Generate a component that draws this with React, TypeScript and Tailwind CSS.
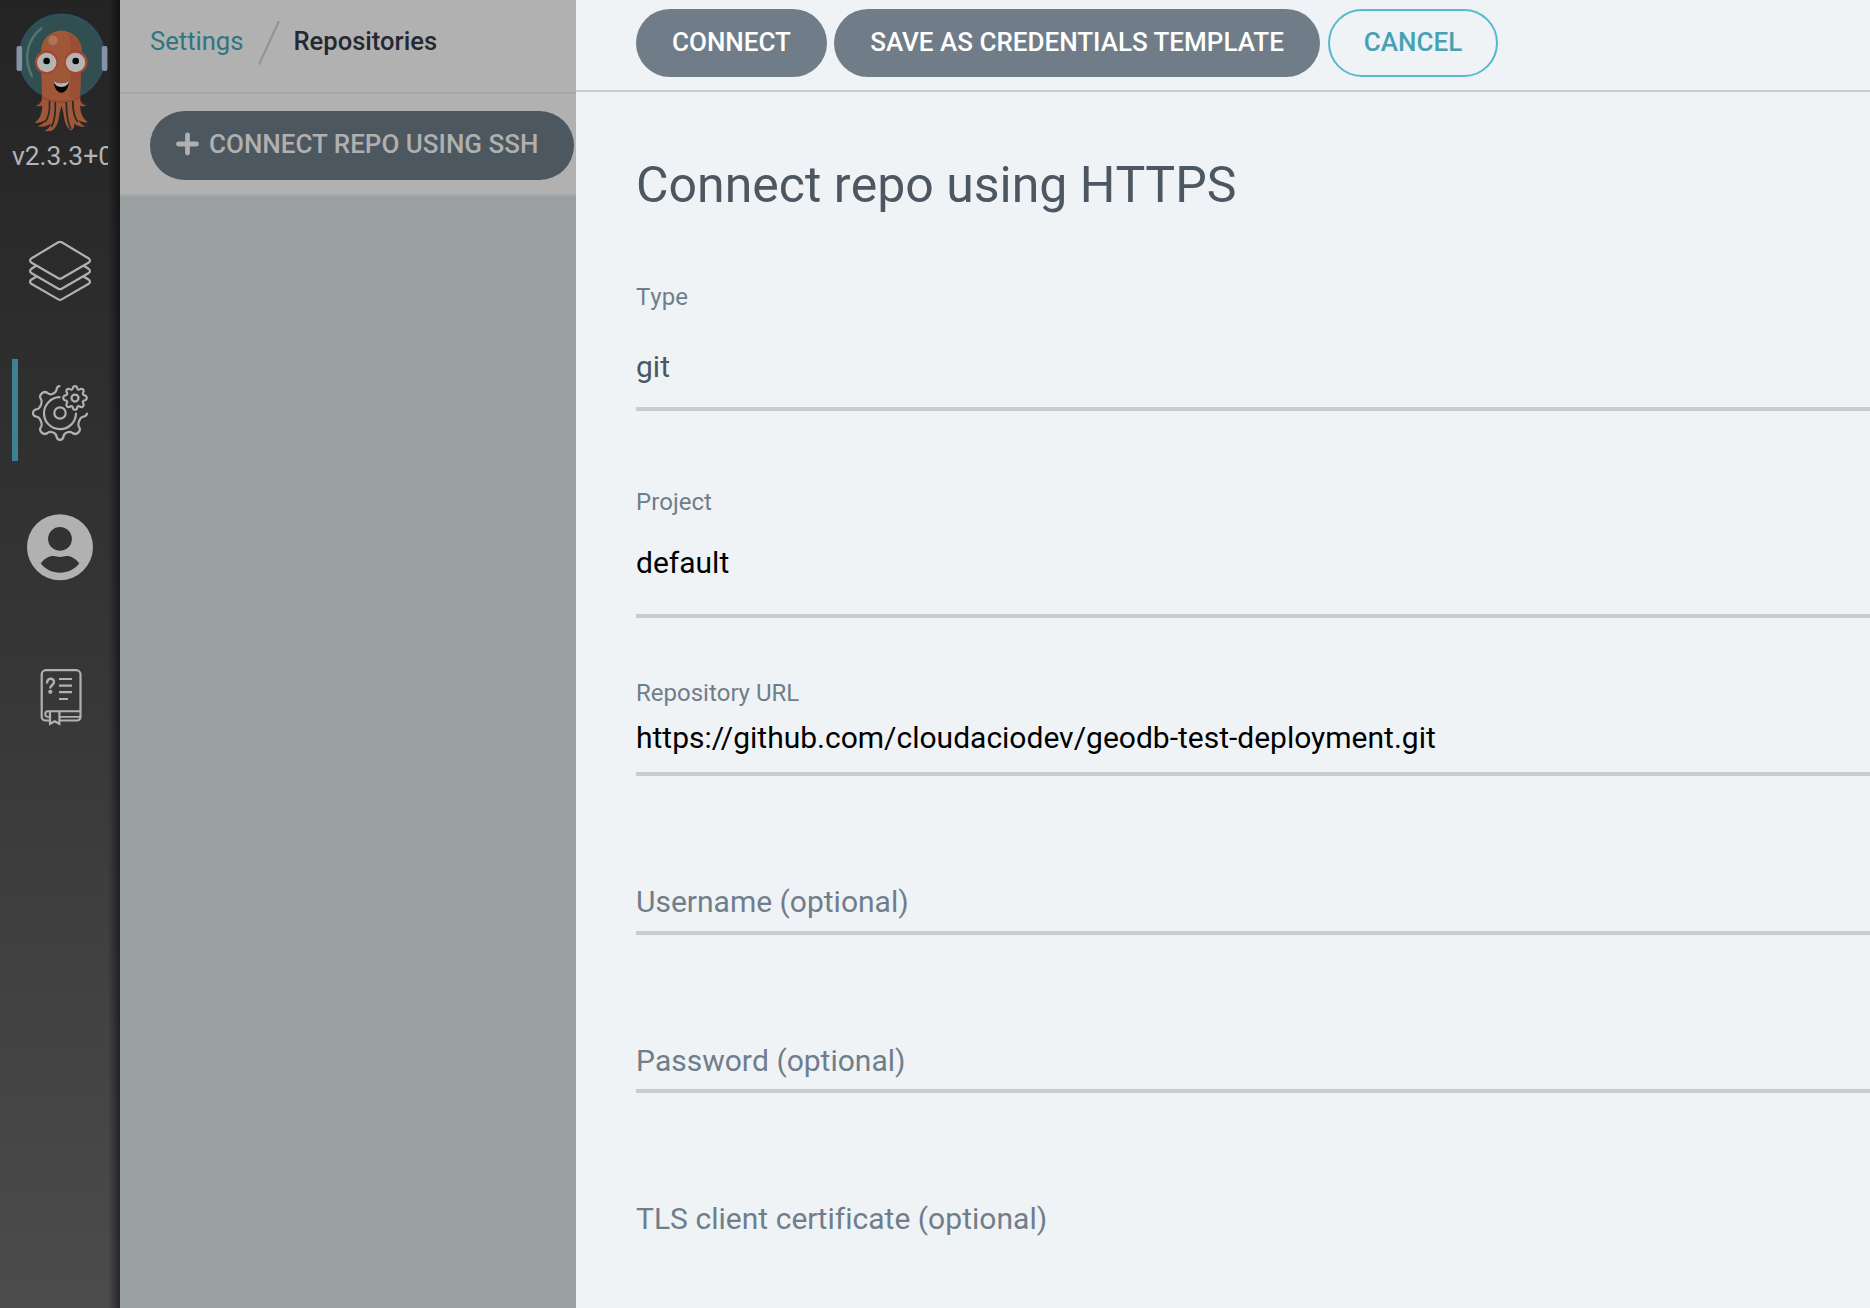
import type { ReactNode } from "react";

function Logo() {
  return (
    <svg className="block h-[138px] w-[120px] shrink-0" viewBox="0 0 120 138" fill="none">
      <circle cx="61.8" cy="57" r="43.5" fill="#2f4f5c" />
      <circle cx="61.8" cy="57" r="41" fill="#314f51" />
      <path d="M41.5 28.3C28 39 22.500 57 31.800 76" stroke="#4d7673" strokeWidth="2.6" strokeLinecap="round" />
      <rect x="16.500" y="46" width="5.600" height="25" rx="2" fill="#8593a6" />
      <rect x="101.800" y="46" width="5.600" height="25" rx="2" fill="#8593a6" />
      <path d="M42 97c0 4-2 8-6.500 8.200 2.500 1.800 6 1.400 8.500-.4zM80 97c0 4 2 8 6.500 8.200-2.500 1.800-6 1.400-8.500-.4z" fill="#a04a38" />
      <path
        d="M41 51a20.400 20.400 0 0 1 40.800 0L80 98c0 10-.5 17.500 7.800 24.300-4 .4-7.300-.6-9.300-2.500 1 3 3.500 5.200 7 6.700-4.500.6-8.700-.7-11.300-3.300.3 3 .2 5-3.200 7.300-5-3-7-11-7.500-17l-2-8-2 8c-.5 6-2.500 14-7.500 17-2 .8-4.500 1-7.500.5 3.500-2 5.700-4.500 6.500-7.500-3.500 2.800-8.500 3.800-13.500 2.700 4-1.400 7-3.500 9-6.400-3.500 1.800-7.500 3.400-12 3.200C43 117 42.500 108 42 98z"
        fill="#9f5737"
      />
      <path d="M67 33c5 7 4 18 4 28l-1 37h10l1.800-47C81.800 42 75 35 67 33z" fill="#984f35" />
      <path d="M42 97c11 6.500 28 6.500 38.500 0" stroke="#974633" strokeWidth="2" />
      <path d="M49.500 101c.5 9 0 16-4.500 21M55.300 102c.3 10-.2 19-4 25M66.300 102c0 11 1 20 4.500 27M72.800 101c0 9 1 16 5 21" stroke="#262b2c" strokeWidth="1.700" />
      <path d="M61.300 117l-1 13.500h2z" fill="#272727" />
      <circle cx="53" cy="40.500" r="4.700" fill="#b17358" />
      <circle cx="46.500" cy="62.300" r="11.700" fill="#a44632" />
      <circle cx="75.800" cy="62.300" r="11.700" fill="#a44632" />
      <circle cx="46.700" cy="62.500" r="9.700" fill="#b4b4b4" />
      <circle cx="75.500" cy="62.500" r="9.700" fill="#b4b4b4" />
      <circle cx="46.600" cy="61" r="3.300" fill="#050505" />
      <circle cx="75.700" cy="61" r="3.300" fill="#050505" />
      <path d="M53.700 81c4.500 3 10.700 3 15.300 0-.3 7-3.500 11.700-7.600 11.700S54 88 53.700 81z" fill="#080606" />
      <path d="M53.700 81c4.500 3 10.700 3 15.300 0-.2 3.200-3.500 6-7.600 6s-7.500-2.800-7.700-6z" fill="#b4b4b4" />
    </svg>
  );
}

function LayersIcon() {
  return (
    <svg className="block h-[62px] w-[64px]" viewBox="28 240 64 62" fill="none" stroke="#b1b1b1" strokeWidth="2.2" strokeLinejoin="round">
      <path d="M58.300 242.300Q60 241.400 61.700 242.300L88.800 258.500Q91.200 260.500 88.800 262.500L61.700 278.200Q60 279.200 58.300 278.200L31.200 262.500Q28.900 260.500 31.200 258.500Z" />
      <path d="M36.500 265.500L31.200 269Q28.900 271 31.200 273L58.300 288.700Q60 289.700 61.700 288.700L88.800 273Q91.200 271 88.800 269L83.500 265.500" />
      <path d="M36.500 276.500L31.200 279.700Q28.900 281.700 31.200 283.700L58.300 299.400Q60 300.400 61.700 299.400L88.800 283.700Q91.200 281.700 88.800 279.700L83.500 276.500" />
    </svg>
  );
}

function GearsIcon() {
  return (
    <svg className="block h-[60px] w-[60px]" viewBox="30 383 60 60" fill="none" stroke="#b1b1b1" strokeWidth="2.2" strokeLinecap="round" strokeLinejoin="round">
      <circle cx="60" cy="413" r="5.700" />
      <path d="M59.500 397.200A16 16 0 1 0 76 413.500" />
      <path d="M59.500 386.200C57.500 386.200 56.700 388 56.400 390C56 392 54 393.500 51.500 394.200C50 394.700 48.800 394 47.500 393C45.500 391.600 43.500 391.700 41.800 393.400C39.700 395.500 39.500 397.200 41 399.200C42.200 400.900 42 402 41.200 404.200C40.300 406.800 39.600 408.600 37.600 409C34.800 409.400 33 410 33 413C33 416 34.800 416.600 37.600 417C39.600 417.400 40.300 419.200 41.200 421.800C42 424 42.200 425.100 41 426.800C39.500 428.800 39.700 430.500 41.800 432.600C43.500 434.300 45.500 434.400 47.500 433C49.200 431.700 50.500 431.400 52.500 432.200C55 433 56 433.800 56.400 436C56.700 438.300 57.600 439.800 60 439.800C62.400 439.800 63.300 438.300 63.600 436C64 433.800 65 433 67.500 432.200C69.500 431.400 70.800 431.700 72.500 433C74.500 434.400 76.500 434.300 78.200 432.600C80.300 430.500 80.500 428.800 79 426.800C77.800 425.100 78 424 78.800 421.800C79.700 419.200 80.400 417.400 82.400 417C85 416.600 86.500 415.700 87 413.500" />
      <circle cx="75" cy="398.100" r="3.500" />
      <path d="M73 387.200Q75 385.200 77 387.200Q77.100 391 80.700 388.900Q83.800 388.500 83.600 391.700Q81.200 394.900 85.500 395.600Q88.100 398.100 85.500 400.200Q81.200 400.900 83.600 404.200Q83.800 407.400 80.700 407Q77.100 404.700 77 408.700Q75 410.900 73 408.700Q72.900 404.700 69.300 407Q66.200 407.400 66.400 404.200Q68.800 400.900 64.500 400.200Q61.900 398.100 64.500 395.600Q68.800 394.900 66.400 391.700Q66.200 388.500 69.300 388.900Q72.900 391 73 387.200Z" />
    </svg>
  );
}

function UserIcon() {
  return (
    <svg className="block h-[68px] w-[68px]" viewBox="26 513 68 68">
      <path
        fill="#b1b1b1"
        fillRule="evenodd"
        d="M60 514.200a33 33 0 1 1 0 66 33 33 0 0 1 0-66zM60 527a11.900 11.900 0 1 0 0 23.800 11.900 11.900 0 0 0 0-23.800zM40.800 563.500C45 569 52 572.700 60 572.700S75 569 79.200 563.500C76 558.500 71 556 66.500 556C64 556 62.500 557 60 557S56 556 53.500 556C49 556 44 558.500 40.800 563.500z"
      />
    </svg>
  );
}

function DocsIcon() {
  return (
    <svg className="block h-[58px] w-[44px]" viewBox="39 668 44 58" fill="none" stroke="#b1b1b1" strokeWidth="2.2">
      <path d="M49 720.500h-3.500a3.800 3.800 0 0 1-3.800-3.800V674.500a4.300 4.300 0 0 1 4.300-4.300h30.200a4.300 4.300 0 0 1 4.300 4.300V717a3.500 3.500 0 0 1-3.500 3.500H60" />
      <path d="M80.500 711.300H48a2.700 2.700 0 0 0 0 5.600h1.500M60 716.900h20.500" strokeWidth="1.900" />
      <path d="M50 711.500v12.300l4.700-2.600 4.700 2.600v-12.300" />
      <path d="M59 679h13M59 685.600h13M59 692.200h13M59 699h9" />
      <path d="M47 683.400c0-6 7-5.800 7-1.400 0 3.400-3.800 2.600-3.800 6.600" strokeWidth="2.400" />
      <circle cx="50.300" cy="691.800" r="2.100" fill="#b1b1b1" stroke="none" />
    </svg>
  );
}

function Sidebar() {
  return (
    <nav className="relative flex h-full w-[120px] shrink-0 flex-col items-center bg-linear-to-b from-[#242424] from-0% via-[#343434] via-45% to-[#4c4c4c] to-100%">
      <Logo />
      <div className="ml-3 h-[38px] w-24 self-start overflow-hidden text-[26.4px] leading-[36px] whitespace-nowrap text-[#b4b4b4]">
        v2.3.3+0
      </div>
      <div className="mt-16">
        <LayersIcon />
      </div>
      <div className="mt-[57px] flex h-[102px] w-full items-center">
        <div className="ml-3 h-full w-1.5 bg-[#3d8292]" />
        <div className="mt-1.5 ml-3">
          <GearsIcon />
        </div>
      </div>
      <div className="mt-[52px]">
        <UserIcon />
      </div>
      <div className="mt-[87px] ml-0.5">
        <DocsIcon />
      </div>
      <div className="absolute inset-y-0 right-0 w-3 bg-linear-to-r from-transparent to-black/50" />
    </nav>
  );
}

function Background() {
  return (
    <main className="flex h-full w-[456px] shrink-0 flex-col overflow-hidden bg-[#9ba0a3]">
      <div className="flex h-[94px] items-start border-b-2 border-[#a7a7a7] bg-[#b1b1b1] pt-[21px] pl-[30px] text-[25.6px] leading-10">
        <span className="text-[#30767f]">Settings</span>
        <svg className="ml-[15px] block h-11 w-[22px]" viewBox="0 0 22 44" stroke="#8d959b" strokeWidth="2">
          <path d="M1 43.500L21 0" />
        </svg>
        <span className="ml-[13px] font-medium text-[#252833]">Repositories</span>
      </div>
      <div className="flex h-[102px] items-start border-b-2 border-[#a8a9aa] bg-[#b1b1b1] pt-[17px] pl-[30px]">
        <button className="flex h-[69px] w-[424px] items-center rounded-full bg-[#4d575f] pb-0.5 pl-[25px] text-[26px] font-medium whitespace-nowrap text-[#afb0af]">
          <svg className="mr-[10px] mb-0.5 block h-6 w-6" viewBox="0 0 24 24" stroke="#afb0af" strokeWidth="4.800" strokeLinecap="round">
            <path d="M12.500 3v18M3.500 12h18" />
          </svg>
          CONNECT REPO USING SSH
        </button>
      </div>
    </main>
  );
}

function Line() {
  return <div className="h-1 w-full shrink-0 bg-[#cbcbcb]" />;
}

function Label({ children }: { children: ReactNode }) {
  return <div className="text-2xl leading-[30px] text-[#6f7e8a]">{children}</div>;
}

function Panel() {
  return (
    <section className="flex h-full min-w-0 flex-1 flex-col bg-[#eff3f6]">
      <header className="flex h-[92px] shrink-0 items-start border-b-2 border-[#c7cfd1] pt-[9px] pl-[60px] text-[26px] font-medium whitespace-nowrap text-white">
        <button className="h-[68px] w-[191px] rounded-full bg-[#707d88] pb-0.5">CONNECT</button>
        <button className="ml-[7px] h-[68px] w-[486px] rounded-full bg-[#707d88] pb-0.5">SAVE AS CREDENTIALS TEMPLATE</button>
        <button className="ml-2 h-[68px] w-[170px] rounded-full border-2 border-[#56b9cd] pb-0.5 text-[#46a2b3]">CANCEL</button>
      </header>
      <form className="flex flex-col pl-[60px] text-[30px] leading-9 whitespace-nowrap [font-kerning:none] [font-variant-ligatures:none]">
        <h1 className="mt-[63px] text-[50px] leading-[60px] text-[#4c5761]">Connect repo using HTTPS</h1>
        <div className="mt-[67px]">
          <Label>Type</Label>
          <div className="mt-[37px] mb-[22px] text-[#4c5761]">git</div>
          <Line />
        </div>
        <div className="mt-[76px]">
          <Label>Project</Label>
          <div className="mt-7 mb-[33px] text-black">default</div>
          <Line />
        </div>
        <div className="mt-[60px]">
          <Label>Repository URL</Label>
          <div className="mt-3 mb-4 text-black [font-kerning:normal]">https://github.com/cloudaciodev/geodb-test-deployment.git</div>
          <Line />
        </div>
        <div className="mt-[108px]">
          <div className="mb-[11px] text-[#6f7e8a]">Username (optional)</div>
          <Line />
        </div>
        <div className="mt-[108px]">
          <div className="mb-[10px] text-[#6f7e8a]">Password (optional)</div>
          <Line />
        </div>
        <div className="mt-[108px] tracking-[0.03px] text-[#6f7e8a]">TLS client certificate (optional)</div>
      </form>
    </section>
  );
}

export default function App() {
  return (
    <div className="flex h-[1308px] w-[1870px] overflow-hidden font-['Roboto',sans-serif]">
      <Sidebar />
      <Background />
      <Panel />
    </div>
  );
}
